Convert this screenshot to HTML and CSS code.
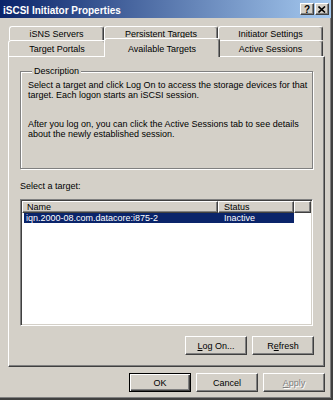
FILE: index.html
```html
<!DOCTYPE html>
<html lang="en">
<head>
    <meta charset="UTF-8">
    <meta name="viewport" content="width=device-width, initial-scale=1.0">
    <title>iSCSI Initiator Properties</title>
    <link rel="stylesheet" href="styles.css">
</head>
<body>
    <div class="window">
        <div class="titlebar">
            <span class="title">iSCSI Initiator Properties</span>
            <div class="caption-buttons">
                <span class="cap-btn help">?</span>
                <span class="cap-btn">
                    <svg width="8" height="7" viewBox="0 0 8 7"><path d="M0.5 0.5 L7 6.5 M7 0.5 L0.5 6.5" stroke="#000" stroke-width="1.6"/></svg>
                </span>
            </div>
        </div>

        <div class="content">
            <!-- two rows of tabs, the selected one sits in the front row -->
            <div class="tab-row back">
                <div class="tab">iSNS Servers</div>
                <div class="tab">Persistent Targets</div>
                <div class="tab">Initiator Settings</div>
            </div>
            <div class="tab-row front">
                <div class="tab">Target Portals</div>
                <div class="tab selected">Available Targets</div>
                <div class="tab">Active Sessions</div>
            </div>

            <div class="panel">
                <fieldset class="group">
                    <legend>Description</legend>
                    <p>Select a target and click Log On to access the storage devices for that target. Each logon starts an iSCSI session.</p>
                    <p class="second">After you log on, you can click the Active Sessions tab to see details about the newly established session.</p>
                </fieldset>

                <div class="list-label">Select a target:</div>
                <div class="listview">
                    <div class="lv-header">
                        <div class="lv-col name">Name</div>
                        <div class="lv-col status">Status</div>
                        <div class="lv-col filler"></div>
                    </div>
                    <div class="lv-row selected">
                        <div class="lv-cell name">iqn.2000-08.com.datacore:i875-2</div>
                        <div class="lv-cell status">Inactive</div>
                    </div>
                </div>

                <div class="button-row panel-buttons">
                    <button class="btn"><u>L</u>og On...</button>
                    <button class="btn">R<u>e</u>fresh</button>
                </div>
            </div>

            <div class="button-row dialog-buttons">
                <button class="btn default">OK</button>
                <button class="btn">Cancel</button>
                <button class="btn" disabled><u>A</u>pply</button>
            </div>
        </div>
    </div>
</body>
</html>
```

FILE: styles.css
```css
body {
    margin: 0;
    font-family: "Liberation Sans", Arial, sans-serif;
    font-size: 9px;
    color: #000;
    background-color: #d4d0c8;
}
.window {
    width: 333px;
    height: 400px;
    box-sizing: border-box;
    background-color: #d4d0c8;
    border-right: 2px solid #404040;
    border-bottom: 2px solid #404040;
    box-shadow: inset -1px -1px #808080;
}

/* title bar */
.titlebar {
    height: 18px;
    display: flex;
    align-items: center;
    justify-content: space-between;
    padding: 0 2px 0 3px;
    background: linear-gradient(to right, #0a246a, #a6caf0);
}
.title {
    color: #fff;
    font-weight: bold;
    font-size: 10px;
    padding-top: 2px;
}
.caption-buttons {
    display: flex;
    gap: 1px;
}
.cap-btn {
    width: 14px;
    height: 12px;
    box-sizing: border-box;
    display: flex;
    align-items: center;
    justify-content: center;
    background-color: #d4d0c8;
    border: 1px solid;
    border-color: #fff #404040 #404040 #fff;
    box-shadow: inset -1px -1px #808080;
}
.cap-btn.help {
    font-weight: bold;
    font-size: 10px;
}

.content {
    padding: 8px 0 0 8px;
}

/* tabs */
.tab-row {
    display: grid;
}
.tab-row.back {
    grid-template-columns: 95px 114px 105px;
    height: 14px;
    margin-left: 1px;
}
.tab-row.front {
    grid-template-columns: 98px 112px 105px;
    height: 16px;
}
.tab {
    display: flex;
    align-items: center;
    justify-content: center;
    background-color: #d4d0c8;
    border: 1px solid;
    border-color: #fff #404040 transparent #fff;
    border-bottom: none;
    border-radius: 3px 3px 0 0;
    box-shadow: inset -1px 0 #808080;
    white-space: nowrap;
}
.tab-row.front .tab {
    padding-top: 1px;
}
.tab.selected {
    position: relative;
    z-index: 1;
    margin: -2px -2px -1px;
    padding-top: 0;
}

/* page of the selected tab */
.panel {
    width: 317px;
    height: 311px;
    box-sizing: border-box;
    padding: 9px 11px 0 11px;
    border: 1px solid;
    border-color: #fff #404040 #404040 #fff;
    box-shadow: inset -1px -1px #808080;
}
.group {
    margin: 0;
    height: 103px;
    box-sizing: border-box;
    padding: 3px 2px 0 7px;
    border: 1px solid #808080;
    box-shadow: 1px 1px #fff, inset 1px 1px #fff;
}
.group legend {
    padding: 0 2px;
    margin-left: 4px;
    line-height: 11px;
    background-color: #d4d0c8;
    position: relative;
}
.group p {
    margin: 0;
    line-height: 10px;
}
.group p.second {
    margin-top: 19px;
}

.list-label {
    margin-top: 12px;
    line-height: 10px;
}

/* list view */
.listview {
    margin-top: 8px;
    height: 127px;
    box-sizing: border-box;
    background-color: #fff;
    border: 1px solid;
    border-color: #808080 #fff #fff #808080;
    box-shadow: inset 1px 1px #404040, inset -1px -1px #d4d0c8;
    padding: 1px;
}
.lv-header {
    display: flex;
    height: 12px;
}
.lv-col {
    box-sizing: border-box;
    background-color: #d4d0c8;
    border: 1px solid;
    border-color: #fff #404040 #404040 #fff;
    box-shadow: inset -1px -1px #808080;
    line-height: 10px;
}
.lv-col.name {
    width: 196px;
    padding-left: 4px;
}
.lv-col.status {
    width: 76px;
    padding-left: 5px;
}
.lv-col.filler {
    flex: 1;
}
.lv-row {
    display: flex;
    height: 10px;
    line-height: 10px;
    margin-left: 2px;
}
.lv-row.selected {
    width: 270px;
    background-color: #0a246a;
    color: #fff;
}
.lv-cell.name {
    width: 194px;
    padding-left: 2px;
    box-sizing: border-box;
}
.lv-cell.status {
    padding-left: 6px;
}

/* push buttons */
.button-row {
    display: flex;
    justify-content: flex-end;
    gap: 5px;
}
.panel-buttons {
    margin-top: 10px;
    margin-right: -1px;
}
.dialog-buttons {
    margin-top: 6px;
    width: 317px;
}
.btn {
    width: 62px;
    height: 19px;
    padding: 0;
    font-family: "Liberation Sans", Arial, sans-serif;
    font-size: 9px;
    color: #000;
    background-color: #d4d0c8;
    border: 1px solid;
    border-color: #fff #404040 #404040 #fff;
    box-shadow: inset -1px -1px #808080;
}
.btn.default {
    border: 1px solid #000;
    box-shadow: inset 1px 1px #fff, inset -1px -1px #404040, inset -2px -2px #808080;
}
.btn:disabled {
    color: #808080;
    text-shadow: 1px 1px #fff;
}
```
